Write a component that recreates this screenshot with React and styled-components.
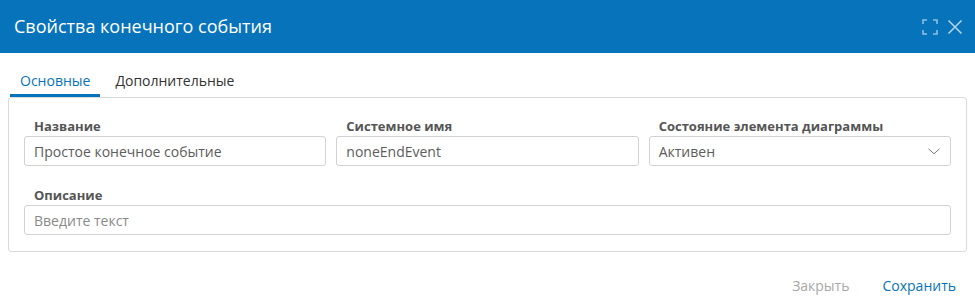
import React from 'react';
import styled, { createGlobalStyle } from 'styled-components';

const GlobalStyle = createGlobalStyle`
  html, body {
    margin: 0;
    padding: 0;
    background: #ffffff;
  }
  body {
    font-family: "Open Sans", "Noto Sans", sans-serif;
    color: #333333;
  }
`;

const Dialog = styled.div`
  width: 975px;
  height: 305px;
  display: flex;
  flex-direction: column;
  background: #ffffff;
`;

const Header = styled.div`
  height: 53px;
  background: #0773bb;
  display: flex;
  align-items: center;
  justify-content: space-between;
  padding: 0 12px 0 14px;
  box-sizing: border-box;
`;

const Title = styled.div`
  color: #ffffff;
  font-size: 18px;
  line-height: 24px;
  margin-top: -1px;
`;

const HeaderTools = styled.div`
  display: flex;
  align-items: center;
  gap: 9px;
`;

const ToolButton = styled.button`
  width: 16px;
  height: 16px;
  padding: 0;
  border: 0;
  background: none;
  display: flex;
  cursor: pointer;
  color: rgba(255, 255, 255, ${p => (p.$dim ? 0.55 : 0.7)});
`;

const Tabs = styled.div`
  display: flex;
  height: 44px;
  padding: 0 10px;
  gap: 5px;
  align-items: stretch;
`;

const Tab = styled.div`
  display: flex;
  align-items: center;
  padding: 13px 10px 0;
  font-size: 14px;
  color: ${p => (p.$active ? '#0773bb' : '#333333')};
  border-bottom: 3px solid ${p => (p.$active ? '#0773bb' : 'transparent')};
  cursor: pointer;
`;

const Panel = styled.div`
  margin: 0 8px;
  border: 1px solid #dadada;
  border-radius: 3px;
  padding: 19px 15px 16px;
  display: flex;
  flex-direction: column;
  gap: 20px;
`;

const Row = styled.div`
  display: grid;
  grid-template-columns: ${p => (p.$cols ? `repeat(${p.$cols}, 1fr)` : '1fr')};
  gap: 10px;
`;

const Field = styled.div`
  display: flex;
  flex-direction: column;
  gap: 1px;
  min-width: 0;
`;

const Label = styled.div`
  font-size: 13px;
  line-height: 18px;
  font-weight: 700;
  color: #555555;
  padding-left: 10px;
`;

const Input = styled.input`
  height: 30px;
  box-sizing: border-box;
  border: 1px solid #d2d2d2;
  border-radius: 3px;
  padding: 0 9px;
  font-family: "Open Sans", "Noto Sans", sans-serif;
  font-size: 14px;
  color: #5c5c5c;
  outline: none;
  width: 100%;
  &::placeholder {
    color: #8a8a8a;
  }
`;

const SelectBox = styled.div`
  height: 30px;
  box-sizing: border-box;
  border: 1px solid #d2d2d2;
  border-radius: 3px;
  padding: 0 10px 0 9px;
  display: flex;
  align-items: center;
  justify-content: space-between;
  font-size: 14px;
  color: #5c5c5c;
  cursor: pointer;
`;

const Footer = styled.div`
  flex: 1;
  display: flex;
  justify-content: flex-end;
  align-items: center;
  gap: 33px;
  padding: 14px 19px 0 0;
`;

const FooterButton = styled.button`
  border: 0;
  background: none;
  padding: 0;
  font-family: "Open Sans", "Noto Sans", sans-serif;
  font-size: 14px;
  color: ${p => (p.$primary ? '#0773bb' : '#a8a8a8')};
  cursor: pointer;
`;

const ExpandIcon = () => (
  <svg width="16" height="16" viewBox="0 0 16 16" fill="none" stroke="currentColor" strokeWidth="1.6">
    <path d="M1 5V1h4M11 1h4v4M15 11v4h-4M5 15H1v-4" />
  </svg>
);

const CloseIcon = () => (
  <svg width="16" height="16" viewBox="0 0 16 16" fill="none" stroke="currentColor" strokeWidth="1.5">
    <path d="M1.5 1.5l13 13M14.5 1.5l-13 13" />
  </svg>
);

const Chevron = () => (
  <svg width="12" height="7" viewBox="0 0 12 7" fill="none" stroke="#777777" strokeWidth="1">
    <path d="M0.5 0.8L6 5.8L11.5 0.8" />
  </svg>
);

export default function App() {
  return (
    <Dialog>
      <GlobalStyle />
      <Header>
        <Title>Свойства конечного события</Title>
        <HeaderTools>
          <ToolButton $dim>
            <ExpandIcon />
          </ToolButton>
          <ToolButton>
            <CloseIcon />
          </ToolButton>
        </HeaderTools>
      </Header>
      <Tabs>
        <Tab $active>Основные</Tab>
        <Tab>Дополнительные</Tab>
      </Tabs>
      <Panel>
        <Row $cols={3}>
          <Field>
            <Label>Название</Label>
            <Input defaultValue="Простое конечное событие" />
          </Field>
          <Field>
            <Label>Системное имя</Label>
            <Input defaultValue="noneEndEvent" />
          </Field>
          <Field>
            <Label>Состояние элемента диаграммы</Label>
            <SelectBox>
              <span>Активен</span>
              <Chevron />
            </SelectBox>
          </Field>
        </Row>
        <Row>
          <Field>
            <Label>Описание</Label>
            <Input placeholder="Введите текст" />
          </Field>
        </Row>
      </Panel>
      <Footer>
        <FooterButton>Закрыть</FooterButton>
        <FooterButton $primary>Сохранить</FooterButton>
      </Footer>
    </Dialog>
  );
}
